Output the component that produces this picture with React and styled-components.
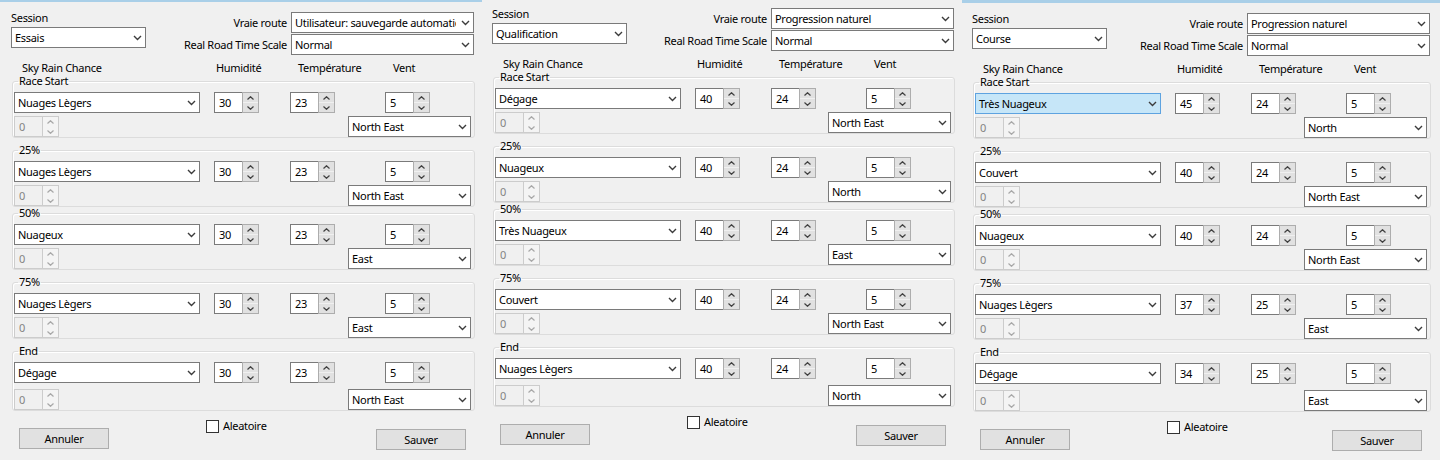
import React from "react";
import styled, { createGlobalStyle } from "styled-components";

const GlobalStyle = createGlobalStyle`
  html, body {
    margin: 0;
    padding: 0;
    background: #f0f0f0;
  }
  body {
    font-family: "Noto Sans", "Liberation Sans", sans-serif;
    font-size: 11px;
    letter-spacing: -0.3px;
    color: #000;
  }
`;

const Screen = styled.div`
  display: flex;
  width: 1440px;
  height: 460px;
  overflow: hidden;
  background: #f0f0f0;
`;

const Window = styled.div`
  flex: none;
  width: ${(p) => p.$width}px;
  box-sizing: border-box;
  border-top: ${(p) => p.$edge}px solid #a9cfe8;
  padding: ${(p) => p.$top}px ${(p) => p.$right}px 0 ${(p) => p.$left}px;
`;

const Header = styled.div`
  display: flex;
  justify-content: space-between;
  align-items: flex-start;
`;

const SessionCol = styled.div`
  display: flex;
  flex-direction: column;
  gap: 2px;
`;

const Label = styled.span`
  line-height: 14px;
  white-space: nowrap;
`;

const RouteGrid = styled.div`
  margin-top: 1px;
  display: grid;
  grid-template-columns: auto 183px;
  column-gap: 4px;
  row-gap: 1px;
  align-items: center;
  justify-items: end;
`;

const ComboBox = styled.div`
  display: flex;
  align-items: center;
  box-sizing: border-box;
  width: ${(p) => p.$width}px;
  height: 21px;
  border: 1px solid ${(p) => (p.$active ? "#5ea3e0" : "#7a7a7a")};
  background: ${(p) => (p.$active ? "#c6e6f8" : "#fff")};
`;

const ComboText = styled.span`
  flex: 1;
  min-width: 0;
  padding-left: 3px;
  margin-right: 2px;
  white-space: nowrap;
  overflow: hidden;
  line-height: 19px;
`;

const ComboArrow = styled.span`
  flex: none;
  width: 15px;
  display: flex;
  align-items: center;
  justify-content: center;
`;

const ColumnHeads = styled.div`
  margin-top: 6px;
  padding-left: 11px;
  display: grid;
  grid-template-columns: 194px 82px 95px auto;
  line-height: 14px;
`;

const Group = styled.fieldset`
  margin: ${(p) => p.$gap}px -1px 0 1px;
  padding: 4px 3px 0 1px;
  border: 1px solid #dcdcdc;
  border-radius: 3px;
  box-shadow: inset 1px 1px 0 #fff;
  min-width: 0;
`;

const Legend = styled.legend`
  margin-left: 4px;
  padding: 0 1px;
  line-height: 14px;
`;

const TopRow = styled.div`
  display: grid;
  grid-template-columns: 200px 76px 95px 46px;
  align-items: start;
`;

const BottomRow = styled.div`
  margin-top: ${(p) => p.$gap}px;
  display: flex;
  justify-content: space-between;
`;

const SpinBox = styled.div`
  display: flex;
  width: 45px;
  height: 21px;
`;

const SpinEdit = styled.span`
  box-sizing: border-box;
  width: 28px;
  height: 21px;
  padding-left: 4px;
  line-height: 19px;
  border: 1px solid ${(p) => (p.$disabled ? "#cccccc" : "#7a7a7a")};
  border-right: none;
  background: ${(p) => (p.$disabled ? "#f0f0f0" : "#fff")};
  color: ${(p) => (p.$disabled ? "#838383" : "#000")};
`;

const SpinButtons = styled.div`
  box-sizing: border-box;
  width: 17px;
  height: 21px;
  display: flex;
  flex-direction: column;
  gap: 1px;
  border: 1px solid ${(p) => (p.$disabled ? "#cccccc" : "#adadad")};
  background: ${(p) => (p.$disabled ? "#f4f4f4" : "#f0f0f0")};
`;

const SpinButton = styled.span`
  flex: 1;
  display: flex;
  align-items: center;
  justify-content: center;
  background: ${(p) => (p.$disabled ? "#f4f4f4" : "#e1e1e1")};
`;

const Footer = styled.div`
  display: flex;
  align-items: flex-start;
  padding: 0 0 0 8px;
`;

const Button = styled.div`
  box-sizing: border-box;
  width: 90px;
  height: 21px;
  margin-top: ${(p) => p.$top}px;
  margin-left: ${(p) => (p.$right ? "auto" : "0")};
  margin-right: ${(p) => (p.$right ? "8px" : "0")};
  border: 1px solid #adadad;
  background: #e1e1e1;
  display: flex;
  align-items: center;
  justify-content: center;
`;

const Check = styled.label`
  margin: 7px 0 0 97px;
  display: flex;
  align-items: center;
  gap: 4px;
  line-height: 16px;
`;

const CheckSquare = styled.span`
  box-sizing: border-box;
  width: 13px;
  height: 13px;
  border: 1px solid #333;
  background: #fff;
`;

const Chevron = () => (
  <svg width="9" height="6" viewBox="0 0 9 6">
    <path d="M1 1 L4.5 4.5 L8 1" fill="none" stroke="#3c3c3c" strokeWidth="1.4" />
  </svg>
);

const Caret = ({ up, disabled }) => (
  <svg width="7" height="4" viewBox="0 0 7 4">
    <path
      d={up ? "M0.5 3.5 L3.5 0.7 L6.5 3.5" : "M0.5 0.5 L3.5 3.3 L6.5 0.5"}
      fill="none"
      stroke={disabled ? "#a8a8a8" : "#404040"}
      strokeWidth="1.2"
    />
  </svg>
);

const Combo = ({ value, width, active }) => (
  <ComboBox $width={width} $active={active}>
    <ComboText>{value}</ComboText>
    <ComboArrow>
      <Chevron />
    </ComboArrow>
  </ComboBox>
);

const Spin = ({ value, disabled }) => (
  <SpinBox>
    <SpinEdit $disabled={disabled}>{value}</SpinEdit>
    <SpinButtons $disabled={disabled}>
      <SpinButton $disabled={disabled}>
        <Caret up disabled={disabled} />
      </SpinButton>
      <SpinButton $disabled={disabled}>
        <Caret disabled={disabled} />
      </SpinButton>
    </SpinButtons>
  </SpinBox>
);

const TITLES = ["Race Start", "25%", "50%", "75%", "End"];
const GAPS = [-1, 5, -1, 5, 5];
const ROW_GAPS = [3, 3, 3, 3, 6];

const windows = [
  {
    width: 482, edge: 2, top: 9, left: 11, right: 8,
    session: "Essais",
    route: "Utilisateur: sauvegarde automatique",
    rows: [
      ["Nuages Lègers", 30, 23, 5, "North East"],
      ["Nuages Lègers", 30, 23, 5, "North East"],
      ["Nuageux", 30, 23, 5, "East"],
      ["Nuages Lègers", 30, 23, 5, "East"],
      ["Dégage", 30, 23, 5, "North East"],
    ],
  },
  {
    width: 480, edge: 0, top: 7, left: 10, right: 8,
    session: "Qualification",
    route: "Progression naturel",
    rows: [
      ["Dégage", 40, 24, 5, "North East"],
      ["Nuageux", 40, 24, 5, "North"],
      ["Très Nuageux", 40, 24, 5, "East"],
      ["Couvert", 40, 24, 5, "North East"],
      ["Nuages Lègers", 40, 24, 5, "North"],
    ],
  },
  {
    width: 478, edge: 3, top: 9, left: 10, right: 10,
    session: "Course",
    route: "Progression naturel",
    active: 0,
    rows: [
      ["Très Nuageux", 45, 24, 5, "North"],
      ["Couvert", 40, 24, 5, "North East"],
      ["Nuageux", 40, 24, 5, "North East"],
      ["Nuages Lègers", 37, 25, 5, "East"],
      ["Dégage", 34, 25, 5, "East"],
    ],
  },
];

const WeatherGroup = ({ index, row, active }) => {
  const [sky, hum, temp, wind, dir] = row;
  return (
    <Group $gap={GAPS[index]}>
      <Legend>{TITLES[index]}</Legend>
      <TopRow>
        <Combo value={sky} width={186} active={active} />
        <Spin value={hum} />
        <Spin value={temp} />
        <Spin value={wind} />
      </TopRow>
      <BottomRow $gap={ROW_GAPS[index]}>
        <Spin value={0} disabled />
        <Combo value={dir} width={123} />
      </BottomRow>
    </Group>
  );
};

const WeatherWindow = ({ w }) => (
  <Window $width={w.width} $edge={w.edge} $top={w.top} $left={w.left} $right={w.right}>
    <Header>
      <SessionCol>
        <Label>Session</Label>
        <Combo value={w.session} width={135} />
      </SessionCol>
      <RouteGrid>
        <Label>Vraie route</Label>
        <Combo value={w.route} width={183} />
        <Label>Real Road Time Scale</Label>
        <Combo value="Normal" width={183} />
      </RouteGrid>
    </Header>
    <ColumnHeads>
      <span>Sky Rain Chance</span>
      <span>Humidité</span>
      <span>Température</span>
      <span>Vent</span>
    </ColumnHeads>
    {w.rows.map((row, i) => (
      <WeatherGroup key={i} index={i} row={row} active={w.active === i} />
    ))}
    <Footer>
      <Button $top={17}>Annuler</Button>
      <Check>
        <CheckSquare />
        Aleatoire
      </Check>
      <Button $top={18} $right>
        Sauver
      </Button>
    </Footer>
  </Window>
);

export default function App() {
  return (
    <>
      <GlobalStyle />
      <Screen>
        {windows.map((w, i) => (
          <WeatherWindow key={i} w={w} />
        ))}
      </Screen>
    </>
  );
}
